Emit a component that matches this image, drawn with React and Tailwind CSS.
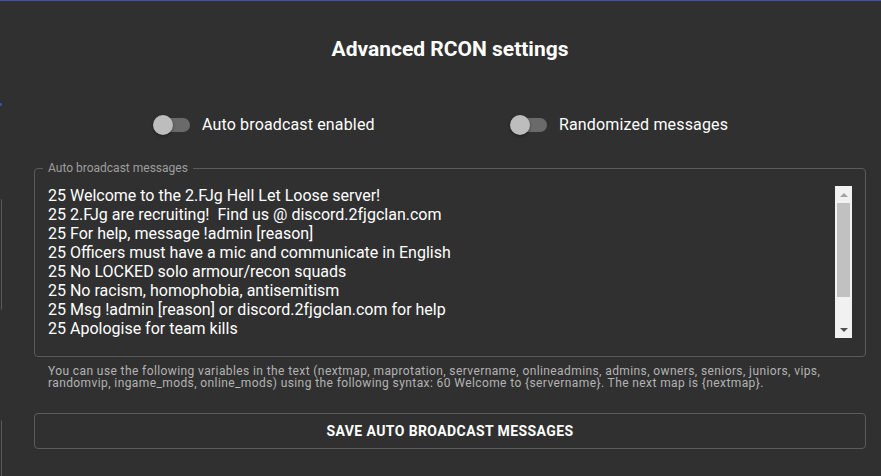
import React from 'react';

const MESSAGES = [
  '25 Welcome to the 2.FJg Hell Let Loose server!',
  '25 2.FJg are recruiting!  Find us @ discord.2fjgclan.com',
  '25 For help, message !admin [reason]',
  '25 Officers must have a mic and communicate in English',
  '25 No LOCKED solo armour/recon squads',
  '25 No racism, homophobia, antisemitism',
  '25 Msg !admin [reason] or discord.2fjgclan.com for help',
  '25 Apologise for team kills',
];

const Toggle = ({ label }) => (
  <label className="flex items-center cursor-pointer">
    <span className="relative flex h-[38px] w-[58px] items-center p-[12px]">
      <span className="h-[14px] w-[34px] rounded-full bg-[#6a6a6a]" />
      <span className="absolute left-[9px] top-[9px] h-[20px] w-[20px] rounded-full bg-[#bdbdbd] shadow-[0_1px_3px_rgba(0,0,0,0.4)]" />
    </span>
    <span className="text-[16px] tracking-[0.15px] text-white">{label}</span>
  </label>
);

const ScrollBar = () => (
  <div className="flex w-[17px] shrink-0 flex-col items-center bg-[#f1f1f1]">
    <div className="flex h-[17px] w-full items-center justify-center">
      <div className="h-0 w-0 border-x-[4px] border-b-[4px] border-x-transparent border-b-[#a3a3a3]" />
    </div>
    <div className="h-[94px] w-[13px] bg-[#c1c1c1]" />
    <div className="flex-1" />
    <div className="flex h-[17px] w-full items-center justify-center">
      <div className="h-0 w-0 border-x-[4px] border-t-[4px] border-x-transparent border-t-[#505050]" />
    </div>
  </div>
);

export default function App() {
  return (
    <div className="flex h-[476px] w-[881px] overflow-hidden border-t border-[#3f51b5] bg-[#303030] font-['Roboto',_'Liberation_Sans',_sans-serif]">
      <div className="flex w-[2px] shrink-0 flex-col">
        <div className="h-[102px]" />
        <div className="h-[3px] w-[2px] rounded-r-full bg-[#3f51b5]" />
        <div className="h-[93px]" />
        <div className="h-[111px] rounded-r-[4px] border-r border-[#5a5a5a]" />
        <div className="h-[110px]" />
        <div className="flex-1 rounded-tr-[4px] border-r border-[#5a5a5a]" />
      </div>

      <div className="flex w-[864px] shrink-0 flex-col pl-[32px]">
        <h1 className="mt-[36px] h-[24px] text-center text-[21px] font-bold leading-[24px] text-white">
          Advanced RCON settings
        </h1>

        <div className="mt-[45px] flex pl-[110px]">
          <div className="w-[357px]">
            <Toggle label="Auto broadcast enabled" />
          </div>
          <Toggle label="Randomized messages" />
        </div>

        <fieldset className="mt-[18px] rounded-[4px] border border-[#5b5b5b] px-[13px] pb-[18px] pt-[12px]">
          <legend className="ml-[-5px] px-[5px] text-[12px] leading-[12px] text-[#9e9e9e]">
            Auto broadcast messages
          </legend>
          <div className="flex h-[152px]">
            <div className="flex-1 overflow-hidden text-[16px] leading-[19px] text-white whitespace-pre">
              {MESSAGES.map((m) => (
                <div key={m}>{m}</div>
              ))}
            </div>
            <ScrollBar />
          </div>
        </fieldset>

        <p className="mx-[14px] mt-[8px] text-[12px] leading-[12px] tracking-[0.4px] text-[#b3b3b3]">
          You can use the following variables in the text (nextmap, maprotation, servername, onlineadmins, admins, owners, seniors, juniors, vips, randomvip, ingame_mods, online_mods) using the following syntax: 60 Welcome to {'{servername}'}. The next map is {'{nextmap}'}.
        </p>

        <button
          type="button"
          className="mt-[24px] h-[36px] rounded-[4px] border border-[#5b5b5b] text-[14px] font-bold uppercase tracking-[0.4px] text-white"
        >
          Save auto broadcast messages
        </button>
      </div>
    </div>
  );
}
